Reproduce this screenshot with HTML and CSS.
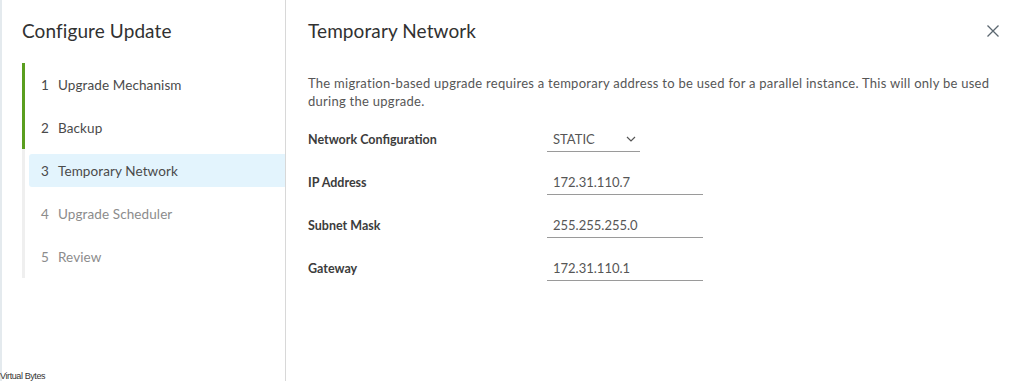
FILE: index.html
```html
<!DOCTYPE html>
<html lang="en">
<head>
    <meta charset="UTF-8">
    <meta name="viewport" content="width=device-width, initial-scale=1.0">
    <title>Configure Update</title>
    <link rel="stylesheet" href="styles.css">
</head>
<body>
    <div class="wizard">
        <aside class="wizard-nav">
            <h2 class="wizard-title">Configure Update</h2>
            <ol class="steps">
                <li class="step done"><span class="step-link"><span class="step-num">1</span>Upgrade Mechanism</span></li>
                <li class="step done"><span class="step-link"><span class="step-num">2</span>Backup</span></li>
                <li class="step current"><span class="step-link"><span class="step-num">3</span>Temporary Network</span></li>
                <li class="step"><span class="step-link"><span class="step-num">4</span>Upgrade Scheduler</span></li>
                <li class="step"><span class="step-link"><span class="step-num">5</span>Review</span></li>
            </ol>
        </aside>

        <main class="wizard-body">
            <header class="body-header">
                <h3 class="body-title">Temporary Network</h3>
                <button class="close-btn" aria-label="Close">
                    <svg width="14" height="14" viewBox="0 0 14 14"><path d="M1.5 1.5 L12.5 12.5 M12.5 1.5 L1.5 12.5" stroke="#5b6770" stroke-width="1.3" fill="none"/></svg>
                </button>
            </header>

            <p class="intro">The migration-based upgrade requires a temporary address to be used for a parallel instance. This will only be used during the upgrade.</p>

            <div class="form">
                <div class="form-row">
                    <label>Network Configuration</label>
                    <div class="select">
                        <span>STATIC</span>
                        <svg width="10" height="6" viewBox="0 0 10 6"><path d="M1 1 L5 5 L9 1" stroke="#565656" stroke-width="1.2" fill="none"/></svg>
                    </div>
                </div>
                <div class="form-row">
                    <label>IP Address</label>
                    <input class="field" type="text" value="172.31.110.7">
                </div>
                <div class="form-row">
                    <label>Subnet Mask</label>
                    <input class="field" type="text" value="255.255.255.0">
                </div>
                <div class="form-row">
                    <label>Gateway</label>
                    <input class="field" type="text" value="172.31.110.1">
                </div>
            </div>
        </main>
    </div>
    <div class="watermark">Virtual Bytes</div>
</body>
</html>
```

FILE: styles.css
```css
body {
    margin: 0;
    padding: 0;
    background: #fff;
    font-family: 'Lato', sans-serif;
    color: #565656;
}
.wizard {
    display: flex;
    height: 381px;
    border-left: 2px solid #e4eaee;
}
.wizard-nav {
    width: 284px;
    border-right: 1px solid #d8d8d8;
    padding-left: 20px;
    box-sizing: border-box;
}
.wizard-title {
    margin: 0;
    padding-top: 19px;
    height: 63px;
    box-sizing: border-box;
    font-size: 19px;
    font-weight: 400;
    letter-spacing: 0.1px;
    color: #313131;
}
.steps {
    list-style: none;
    margin: 0;
    padding: 0;
}
.step {
    height: 43px;
    border-left: 3px solid #efefef;
    padding: 5px 0 5px 4px;
    box-sizing: border-box;
}
.step.done {
    border-left-color: #5a9e1f;
}
.step-link {
    display: flex;
    align-items: center;
    height: 33px;
    padding-left: 12px;
    font-size: 13.5px;
    letter-spacing: 0.1px;
    color: #8c8c8c;
    border-radius: 3px 0 0 3px;
}
.step.done .step-link,
.step.current .step-link {
    color: #4a4a4a;
}
.step.current .step-link {
    background: #e3f4fd;
}
.step-num {
    width: 17px;
}
.wizard-body {
    flex: 1;
    padding: 0 22px;
}
.body-header {
    display: flex;
    justify-content: space-between;
    align-items: center;
    height: 63px;
    box-sizing: border-box;
    padding-bottom: 2px;
}
.body-title {
    margin: 0;
    font-size: 19px;
    font-weight: 400;
    letter-spacing: 0.1px;
    color: #313131;
}
.close-btn {
    border: none;
    background: none;
    padding: 0;
    margin-right: 2px;
    display: flex;
}
.intro {
    margin: 11px 0 8px;
    font-size: 13px;
    line-height: 18px;
    letter-spacing: 0.27px;
    color: #565656;
}
.form-row {
    display: flex;
    align-items: center;
    height: 43px;
}
.form-row label {
    width: 239px;
    font-size: 12.5px;
    font-weight: 700;
    color: #3c3c3c;
}
.field,
.select {
    font-family: 'Lato', sans-serif;
    font-size: 13px;
    color: #565656;
    border: none;
    border-bottom: 1px solid #9a9a9a;
    padding: 4px 6px 5px;
    height: 24px;
    box-sizing: border-box;
    outline: none;
}
.field {
    width: 156px;
}
.select {
    width: 93px;
    display: flex;
    align-items: center;
    justify-content: space-between;
    padding-right: 4px;
}
.watermark {
    position: absolute;
    left: 0;
    bottom: 0;
    font-family: 'Liberation Sans', Arial, sans-serif;
    font-size: 9px;
    letter-spacing: -0.4px;
    color: #333;
}
```
